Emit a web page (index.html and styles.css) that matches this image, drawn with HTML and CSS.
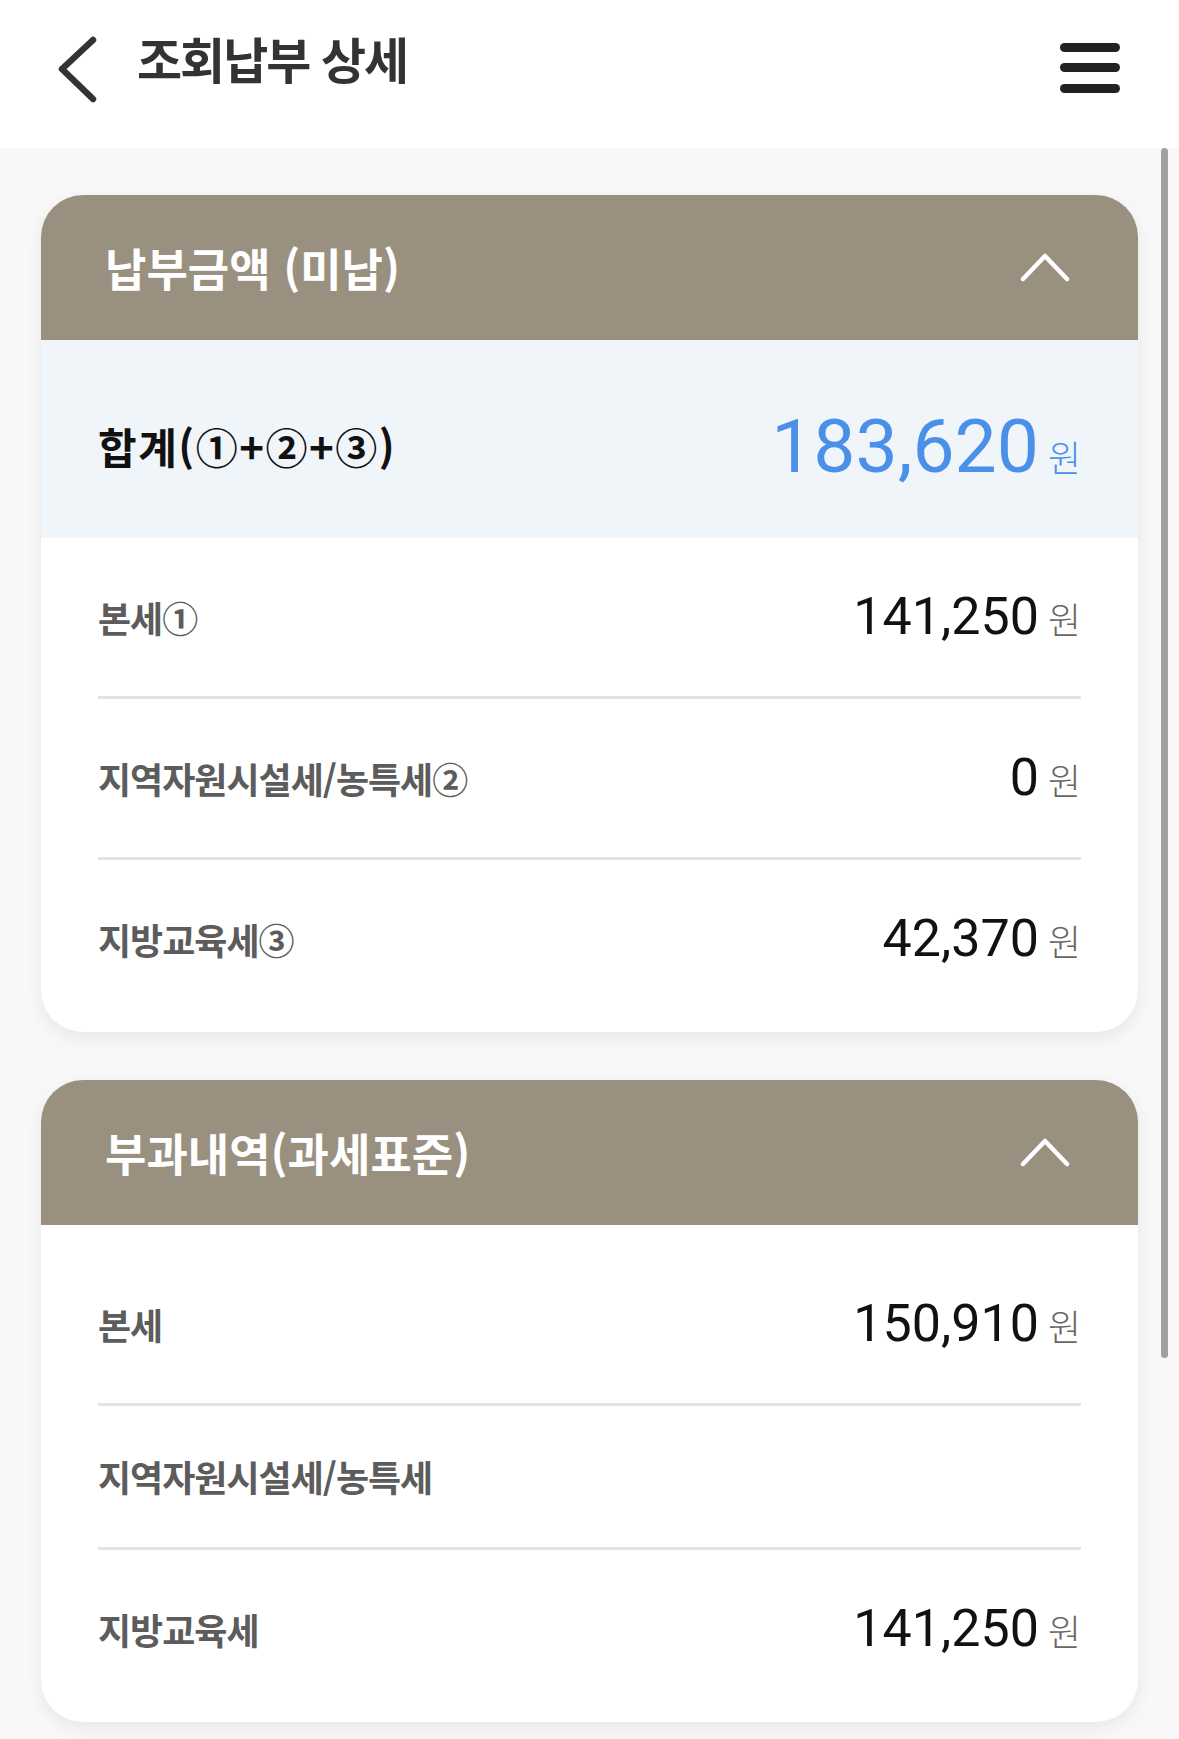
FILE: index.html
```html
<!DOCTYPE html>
<html lang="ko">
<head>
<meta charset="utf-8">
<title>조회납부 상세</title>
<link rel="stylesheet" href="styles.css">
</head>
<body>
<header class="topbar">
  <svg class="back" viewBox="0 0 44 72" width="44" height="72" aria-hidden="true">
    <polyline points="37,7 6,36 37,66" fill="none" stroke="#333" stroke-width="6.5" stroke-linecap="round" stroke-linejoin="round"/>
  </svg>
  <h1 class="title">조회납부 상세</h1>
  <svg class="menu" viewBox="0 0 60 50" width="60" height="50" aria-hidden="true">
    <rect x="0" y="0" width="60" height="9" rx="4.5" fill="#222"/>
    <rect x="0" y="20" width="60" height="9" rx="4.5" fill="#222"/>
    <rect x="0" y="41" width="60" height="9" rx="4.5" fill="#222"/>
  </svg>
</header>

<main class="content">
  <section class="card">
    <div class="card-head">
      <h2 class="card-title">납부금액 (미납)</h2>
      <svg class="chev" viewBox="0 0 50 30" width="50" height="30" aria-hidden="true">
        <polyline points="3,26 25,3 47,26" fill="none" stroke="#fff" stroke-width="4.5" stroke-linecap="round" stroke-linejoin="round"/>
      </svg>
    </div>
    <div class="total">
      <span class="total-label">합계(①+②+③)</span>
      <span class="amount amount--total"><span class="num">183,620</span><span class="unit">원</span></span>
    </div>
    <div class="list">
      <div class="row">
        <span class="label">본세①</span>
        <span class="amount"><span class="num">141,250</span><span class="unit">원</span></span>
      </div>
      <div class="row">
        <span class="label">지역자원시설세/농특세②</span>
        <span class="amount"><span class="num">0</span><span class="unit">원</span></span>
      </div>
      <div class="row">
        <span class="label">지방교육세③</span>
        <span class="amount"><span class="num">42,370</span><span class="unit">원</span></span>
      </div>
    </div>
  </section>

  <section class="card">
    <div class="card-head">
      <h2 class="card-title">부과내역(과세표준)</h2>
      <svg class="chev" viewBox="0 0 50 30" width="50" height="30" aria-hidden="true">
        <polyline points="3,26 25,3 47,26" fill="none" stroke="#fff" stroke-width="4.5" stroke-linecap="round" stroke-linejoin="round"/>
      </svg>
    </div>
    <div class="list list--padded">
      <div class="row">
        <span class="label">본세</span>
        <span class="amount"><span class="num">150,910</span><span class="unit">원</span></span>
      </div>
      <div class="row">
        <span class="label">지역자원시설세/농특세</span>
      </div>
      <div class="row">
        <span class="label">지방교육세</span>
        <span class="amount"><span class="num">141,250</span><span class="unit">원</span></span>
      </div>
    </div>
  </section>
</main>

<div class="scroll-thumb" aria-hidden="true"></div>
</body>
</html>
```

FILE: styles.css
```css
* { box-sizing: border-box; }

html, body {
  margin: 0;
  padding: 0;
  overflow: hidden;
}

body {
  background: #f8f8f8;
  font-family: "Noto Sans CJK KR", "Noto Sans", sans-serif;
  color: #111;
  position: relative;
  min-height: 1739px;
}

.topbar {
  height: 148px;
  background: #fff;
  display: flex;
  align-items: center;
  padding: 0 59px 22px 56px;
}

.back {
  display: block;
  flex: none;
  margin-top: 12px;
}

.title {
  margin: 0 0 10px 37px;
  font-size: 49px;
  font-weight: 700;
  letter-spacing: -2px;
  line-height: 60px;
  color: #333;
}

.menu {
  display: block;
  margin-left: auto;
  margin-top: 10px;
  flex: none;
}

.content {
  padding: 47px 41px 0;
}

.card {
  background: #fff;
  border-radius: 42px;
  overflow: hidden;
  box-shadow: 0 6px 18px rgba(0, 0, 0, 0.07);
  margin-bottom: 48px;
}

.card-head {
  height: 145px;
  background: #9a907f;
  display: flex;
  align-items: center;
  justify-content: space-between;
  padding: 0 68px 0 64px;
}

.card-title {
  margin: 0;
  font-size: 45px;
  font-weight: 700;
  letter-spacing: 0;
  color: #fff;
  line-height: 56px;
}

.chev {
  display: block;
  flex: none;
}

.total {
  height: 198px;
  background: #f0f5fa;
  display: flex;
  align-items: center;
  justify-content: space-between;
  padding: 14px 57px 0 57px;
}

.total-label {
  font-size: 42px;
  font-weight: 700;
  letter-spacing: 1.5px;
  color: #111;
  line-height: 56px;
}

.list {
  padding: 0 57px 14px;
}

.list--padded {
  padding-top: 20px;
}

.row {
  display: flex;
  align-items: center;
  justify-content: space-between;
  padding: 45px 0;
}

.row + .row {
  border-top: 3px solid #e3e3e3;
}

.label {
  font-size: 36px;
  font-weight: 700;
  letter-spacing: -1px;
  color: #5c5c5c;
  line-height: 51px;
}

.amount {
  display: flex;
  align-items: baseline;
}

.num {
  font-family: Roboto, "Noto Sans", sans-serif;
  font-size: 52px;
  font-weight: 400;
  line-height: 68px;
  color: #111;
}

.unit {
  font-family: "Noto Sans CJK KR", sans-serif;
  font-size: 36px;
  font-weight: 300;
  color: #666;
  margin-left: 9px;
}

.amount--total .num {
  font-size: 75px;
  line-height: 90px;
  color: #4a8fe8;
}

.amount--total .unit {
  color: #4a8fe8;
}

.scroll-thumb {
  position: absolute;
  top: 148px;
  right: 11px;
  width: 7px;
  height: 1210px;
  background: #a0a0a0;
  border-radius: 4px;
}
```
